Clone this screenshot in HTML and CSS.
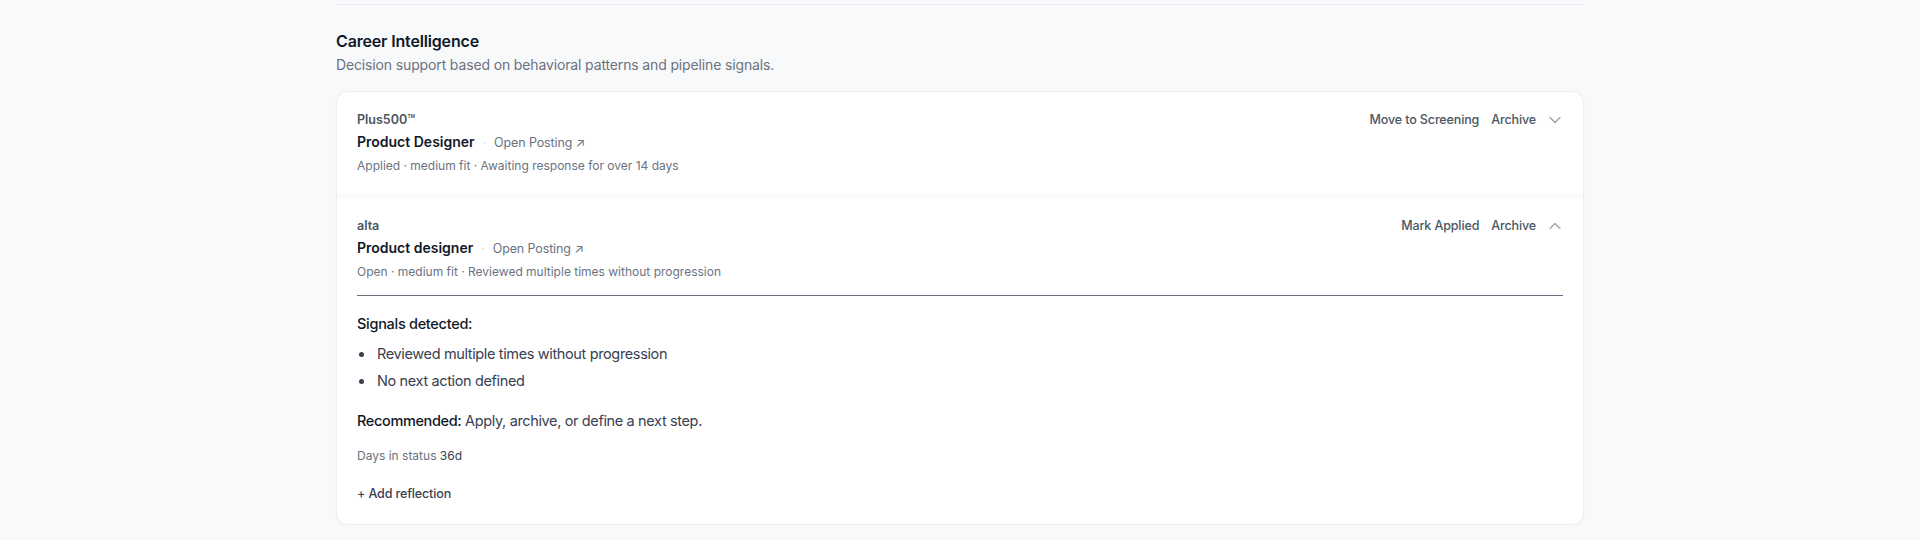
FILE: index.html
```html
<!DOCTYPE html>
<html lang="en">
<head>
	<meta charset="UTF-8">
	<meta content="width=device-width, initial-scale=1.0" name="viewport">
	<title>Career Intelligence</title>
	<link rel="stylesheet" href="styles.css">
</head>
<body>
<div class="page">
	<div class="prev"></div>

	<section class="intel">
		<h2 class="intel-title">Career Intelligence</h2>
		<p class="intel-sub">Decision support based on behavioral patterns and pipeline signals.</p>

		<div class="card">
			<!-- collapsed item -->
			<div class="item">
				<div class="item-head">
					<div class="item-info">
						<div class="company">Plus500™</div>
						<div class="title-row">
							<span class="role">Product Designer</span>
							<span class="sep">·</span>
							<a class="posting" href="#">Open Posting ↗</a>
						</div>
						<div class="meta">Applied · medium fit · Awaiting response for over 14 days</div>
					</div>
					<div class="actions">
						<button class="act">Move to Screening</button>
						<button class="act">Archive</button>
						<button class="toggle">
							<svg width="20" height="20" viewBox="0 0 24 24" fill="none" stroke="currentColor" stroke-width="1.6" stroke-linecap="round" stroke-linejoin="round"><path d="m6 9 6 6 6-6"/></svg>
						</button>
					</div>
				</div>
			</div>

			<!-- expanded item -->
			<div class="item">
				<div class="item-head">
					<div class="item-info">
						<div class="company">alta</div>
						<div class="title-row">
							<span class="role">Product designer</span>
							<span class="sep">·</span>
							<a class="posting" href="#">Open Posting ↗</a>
						</div>
						<div class="meta">Open · medium fit · Reviewed multiple times without progression</div>
					</div>
					<div class="actions">
						<button class="act">Mark Applied</button>
						<button class="act">Archive</button>
						<button class="toggle">
							<svg width="20" height="20" viewBox="0 0 24 24" fill="none" stroke="currentColor" stroke-width="1.6" stroke-linecap="round" stroke-linejoin="round"><path d="m18 15-6-6-6 6"/></svg>
						</button>
					</div>
				</div>

				<div class="detail">
					<h4 class="signals-title">Signals detected:</h4>
					<ul class="signals">
						<li>Reviewed multiple times without progression</li>
						<li>No next action defined</li>
					</ul>
					<p class="recommend"><strong>Recommended:</strong> Apply, archive, or define a next step.</p>
					<p class="days">Days in status <span>36d</span></p>
					<button class="reflect">+ Add reflection</button>
				</div>
			</div>
		</div>
	</section>
</div>
</body>
</html>
```

FILE: styles.css
```css
html, body {
	margin: 0;
	background: #f8f9fb;
	font-family: Inter, "Noto Sans", sans-serif;
	color: #111827;
}
.page {
	width: 1248px;
	margin: 0 auto;
}
.prev {
	height: 4px;
	border-bottom: 1px solid #eceef1;
}
.intel {
	padding-top: 24px;
}
.intel-title {
	margin: 0;
	font-size: 16px;
	line-height: 24px;
	font-weight: 600;
	letter-spacing: -0.01em;
	color: #111827;
}
.intel-sub {
	margin: 2px 0 0;
	font-size: 14px;
	line-height: 20px;
	letter-spacing: -0.01em;
	color: #6b7280;
}
.card {
	margin-top: 16px;
	background: #fff;
	border: 1px solid #eef0f3;
	border-radius: 12px;
	box-shadow: 0 1px 2px rgba(16, 24, 40, 0.04);
	overflow: hidden;
}
.item {
	padding: 20px 20px 20px;
}
.item + .item {
	border-top: 4px solid #f9fafb;
	padding-top: 20px;
	padding-bottom: 21px;
}
.item-head {
	display: flex;
	justify-content: space-between;
	align-items: flex-start;
}
.company {
	font-size: 12.5px;
	line-height: 16px;
	font-weight: 600;
	color: #4b5563;
}
.title-row {
	display: flex;
	align-items: baseline;
	gap: 8px;
	margin-top: 3px;
	line-height: 22px;
}
.role {
	font-size: 14px;
	font-weight: 600;
	color: #111827;
}
.sep {
	font-size: 12px;
	line-height: 16px;
	color: #d1d5db;
}
.posting {
	font-size: 12.5px;
	line-height: 16px;
	letter-spacing: -0.01em;
	color: #6b7280;
	text-decoration: none;
}
.meta {
	margin-top: 5px;
	font-size: 12px;
	line-height: 16px;
	color: #6b7280;
}
.actions {
	display: flex;
	align-items: center;
	gap: 12px;
	margin-top: -2px;
}
.act, .toggle, .reflect {
	background: none;
	border: 0;
	padding: 0;
	font-family: inherit;
	cursor: pointer;
}
.act {
	font-size: 12.5px;
	line-height: 20px;
	font-weight: 500;
	letter-spacing: -0.01em;
	color: #4b5563;
}
.toggle {
	display: flex;
	margin-left: -3px;
	margin-right: -2px;
	color: #9ca3af;
}
.detail {
	margin-top: 15px;
	padding-top: 17px;
	border-top: 1px solid #6b7080;
}
.signals-title {
	margin: 0;
	font-size: 14.5px;
	line-height: 22px;
	font-weight: 500;
	letter-spacing: -0.02em;
	color: #111827;
}
.signals {
	list-style: none;
	margin: 8px 0 0;
	padding: 0;
}
.signals li {
	position: relative;
	padding-left: 20px;
	font-size: 14.5px;
	line-height: 22px;
	letter-spacing: -0.025em;
	color: #374151;
}
.signals li + li {
	margin-top: 5px;
}
.signals li::before {
	content: "";
	position: absolute;
	left: 2px;
	top: 9px;
	width: 5px;
	height: 5px;
	border-radius: 50%;
	background: #374151;
}
.recommend {
	margin: 18px 0 0;
	font-size: 14.5px;
	line-height: 22px;
	letter-spacing: -0.025em;
	color: #374151;
}
.recommend strong {
	font-weight: 500;
	color: #111827;
}
.days {
	margin: 16px 0 0;
	font-size: 12px;
	line-height: 16px;
	color: #6b7280;
}
.days span {
	font-weight: 400;
	color: #374151;
}
.reflect {
	display: block;
	margin-top: 21px;
	font-size: 12.5px;
	line-height: 18px;
	font-weight: 500;
	letter-spacing: -0.01em;
	color: #374151;
}
```
